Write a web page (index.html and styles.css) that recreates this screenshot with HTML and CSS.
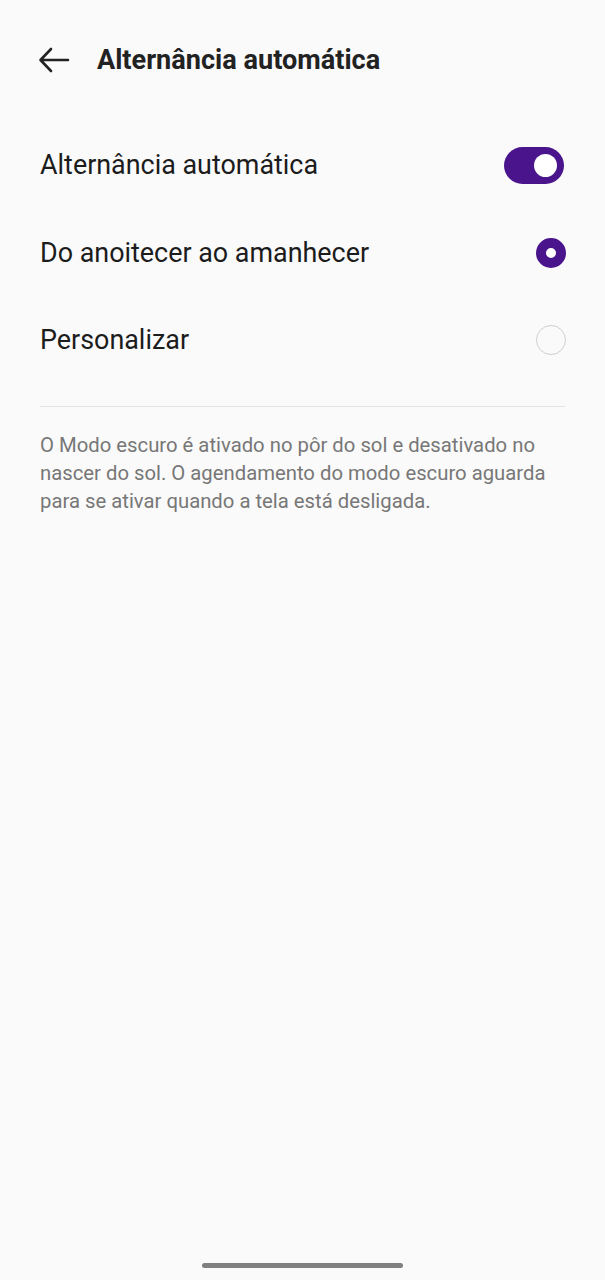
FILE: index.html
```html
<!DOCTYPE html>
<html lang="pt">
<head>
    <meta charset="UTF-8">
    <meta name="viewport" content="width=device-width, initial-scale=1.0">
    <title>Alternância automática</title>
    <link rel="stylesheet" href="styles.css">
</head>
<body>
    <div class="screen">
        <div class="toolbar">
            <div class="back">
                <svg width="32" height="26" viewBox="0 0 32 26">
                    <path d="M30 13H3M13 2L2.5 13L13 24" fill="none" stroke="#222" stroke-width="2.6" stroke-linecap="round" stroke-linejoin="round"/>
                </svg>
            </div>
            <h1>Alternância automática</h1>
        </div>

        <div class="list">
            <div class="row">
                <span class="label">Alternância automática</span>
                <div class="switch on"><div class="knob"></div></div>
            </div>
            <div class="row">
                <span class="label">Do anoitecer ao amanhecer</span>
                <div class="radio checked"></div>
            </div>
            <div class="row">
                <span class="label">Personalizar</span>
                <div class="radio"></div>
            </div>
        </div>

        <div class="divider"></div>

        <p class="note">O Modo escuro é ativado no pôr do sol e desativado no nascer do sol. O agendamento do modo escuro aguarda para se ativar quando a tela está desligada.</p>

        <div class="home-bar"></div>
    </div>
</body>
</html>
```

FILE: styles.css
```css
body {
    margin: 0;
    background-color: #fafafa;
    font-family: Roboto, "Noto Sans", sans-serif;
    color: #1f1f1f;
}
.screen {
    width: 605px;
    height: 1280px;
    position: relative;
    overflow: hidden;
}
.toolbar {
    display: flex;
    align-items: center;
    height: 60px;
    padding: 30px 0 0 38px;
}
.back {
    width: 32px;
    height: 26px;
    display: flex;
    margin-right: 27px;
}
.toolbar h1 {
    margin: 0;
    font-size: 27.1px;
    font-weight: 700;
    color: #222;
}
.list {
    margin-top: 31px;
    padding: 0 39px 0 40px;
}
.row {
    height: 88px;
    display: flex;
    align-items: center;
    justify-content: space-between;
}
.row:last-child {
    height: 86px;
}
.label {
    font-size: 26.9px;
    color: #1c1c1c;
}
.switch {
    width: 60px;
    height: 37px;
    border-radius: 19px;
    background-color: #4a148c;
    display: flex;
    align-items: center;
    justify-content: flex-end;
    padding-right: 7px;
    margin-right: 2px;
    box-sizing: border-box;
}
.knob {
    width: 23px;
    height: 23px;
    border-radius: 50%;
    background-color: #fff;
}
.radio {
    width: 30px;
    height: 30px;
    border-radius: 50%;
    border: 1.5px solid #cfcfcf;
    box-sizing: border-box;
}
.radio.checked {
    border: 10px solid #4a148c;
    background-color: #fff;
}
.divider {
    height: 1px;
    background-color: #e3e3e3;
    margin: 23px 40px 0 40px;
}
.note {
    margin: 24px 40px 0 40px;
    font-size: 20.3px;
    line-height: 28px;
    color: #777;
}
.home-bar {
    position: absolute;
    left: 202px;
    top: 1263px;
    width: 201px;
    height: 5px;
    border-radius: 3px;
    background-color: #808080;
}
```
